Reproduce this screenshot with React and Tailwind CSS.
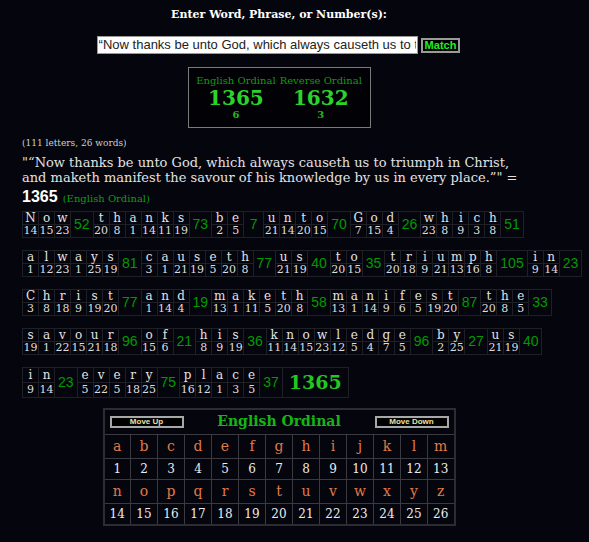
const rows = [
  ["Now", "thanks", "be", "unto", "God", "which"],
  ["always", "causeth", "us", "to", "triumph", "in"],
  ["Christ", "and", "maketh", "manifest", "the"],
  ["savour", "of", "his", "knowledge", "by", "us"],
  ["in", "every", "place"],
];

const val = (c) => c.toLowerCase().charCodeAt(0) - 96;
const sum = (w) => w.split("").reduce((s, c) => s + val(c), 0);

const alphabet = "abcdefghijklmnopqrstuvwxyz".split("");

function WordRow({ words, last }) {
  return (
    <table className="border-collapse mb-[12px] whitespace-nowrap">
      <tbody>
        <tr>
          {words.flatMap((w, wi) => [
            ...w.split("").map((c, i) => (
              <td
                key={`${wi}-${i}`}
                className="border border-[#1f1f26] h-[13px] p-0 text-center text-[12px] leading-[12px] text-[#e4e4e4]"
              >
                <div className="w-[15px]">{c}</div>
              </td>
            )),
            <td
              key={`${wi}-t`}
              rowSpan={2}
              className="border border-[#1f1f26] p-0 text-center font-['Liberation_Sans',sans-serif] text-[14px] text-[#009a00]"
            >
              <div className="min-w-[19px] px-[3px]">{sum(w)}</div>
            </td>,
          ])}
          {last && (
            <td
              rowSpan={2}
              className="border border-[#1f1f26] px-[6px] text-center font-['DejaVu_Serif',serif] font-bold text-[19px] text-[#22c722]"
            >
              {last}
            </td>
          )}
        </tr>
        <tr>
          {words.flatMap((w, wi) =>
            w.split("").map((c, i) => (
              <td
                key={`${wi}-${i}`}
                className="border border-[#1f1f26] h-[12px] p-0 text-center text-[11px] leading-[12px] text-[#dedede]"
              >
                {val(c)}
              </td>
            ))
          )}
        </tr>
      </tbody>
    </table>
  );
}

export default function App() {
  return (
    <div className="min-h-[542px] bg-[#05050e] font-['DejaVu_Serif',serif] pl-[22px]">
      <div className="w-[514px] flex flex-col items-center">
        <h1 className="pt-[8px] text-[11px] leading-[14px] font-bold text-white">
          Enter Word, Phrase, or Number(s):
        </h1>
        <div className="mt-[14px] flex items-center gap-[3px] -ml-[1px]">
          <input
            type="text"
            readOnly
            value="“Now thanks be unto God, which always causeth us to triumph in Christ, and maketh manifest the savour of his knowledge by us in every place.”"
            className="w-[321px] h-[18px] bg-white border border-[#999] px-[1px] font-['Liberation_Sans',sans-serif] text-[13px] text-[#222] outline-none"
          />
          <button className="h-[15px] px-[2px] bg-black border-2 border-[#9a9a9a] font-['Liberation_Sans',sans-serif] font-bold text-[11px] leading-[10px] text-[#22ee22]">
            Match
          </button>
        </div>
        <div className="mt-[13px] w-[183px] h-[61px] border border-[#7a7a7a] bg-[#020206] flex justify-center gap-[4px] pt-[7px]">
          <div className="flex flex-col items-center">
            <span className="text-[10px] leading-[12px] text-[#129a12]">English Ordinal</span>
            <span className="text-[20px] leading-[22px] font-bold text-[#2bd42b]">1365</span>
            <span className="text-[10px] leading-[12px] font-bold text-[#22b822]">6</span>
          </div>
          <div className="flex flex-col items-center">
            <span className="text-[10px] leading-[12px] text-[#129a12]">Reverse Ordinal</span>
            <span className="text-[20px] leading-[22px] font-bold text-[#2bd42b]">1632</span>
            <span className="text-[10px] leading-[12px] font-bold text-[#22b822]">3</span>
          </div>
        </div>
      </div>

      <p className="mt-[10px] text-[9px] leading-[10px] text-[#d0d0d0]">(111 letters, 26 words)</p>
      <p className="mt-[7px] text-[13px] leading-[15px] text-[#e2e2e2]">
        "“Now thanks be unto God, which always causeth us to triumph in Christ,
        <br />
        and maketh manifest the savour of his knowledge by us in every place.”" =
      </p>
      <p className="mt-[2px] leading-[20px] mb-[2px]">
        <span className="font-['Liberation_Sans',sans-serif] font-bold text-[16px] text-white">1365</span>{" "}
        <span className="text-[10px] text-[#129a12]">(English Ordinal)</span>
      </p>

      {rows.map((r, i) => (
        <WordRow key={i} words={r} last={i === rows.length - 1 ? "1365" : null} />
      ))}

      <div className="w-[514px] flex justify-center -mt-[2px]">
        <table className="border-collapse border-2 border-[#2c2c32]">
          <tbody>
            <tr>
              <td colSpan={13} className="border border-[#3a3a40] h-[26px] p-0">
                <div className="flex items-center justify-between px-[5px]">
                  <button className="w-[74px] h-[12px] bg-black border-2 border-[#a8a8a8] font-['Liberation_Sans',sans-serif] font-bold text-[8px] leading-[8px] text-[#e8e0a0]">
                    Move Up
                  </button>
                  <span className="text-[14px] font-bold text-[#15b515] -mt-[1px]">English Ordinal</span>
                  <button className="w-[74px] h-[12px] bg-black border-2 border-[#a8a8a8] font-['Liberation_Sans',sans-serif] font-bold text-[8px] leading-[8px] text-[#e8e0a0]">
                    Move Down
                  </button>
                </div>
              </td>
            </tr>
            {[0, 13].map((start) => [
              <tr key={`l${start}`}>
                {alphabet.slice(start, start + 13).map((c) => (
                  <td
                    key={c}
                    className="border border-[#3a3a40] w-[27px] h-[24px] p-0 text-center text-[14px] text-[#e07a45]"
                  >
                    {c}
                  </td>
                ))}
              </tr>,
              <tr key={`n${start}`}>
                {alphabet.slice(start, start + 13).map((c) => (
                  <td
                    key={c}
                    className="border border-[#3a3a40] w-[27px] h-[21px] p-0 text-center text-[12px] text-[#ececec]"
                  >
                    {val(c)}
                  </td>
                ))}
              </tr>,
            ])}
          </tbody>
        </table>
      </div>
    </div>
  );
}
